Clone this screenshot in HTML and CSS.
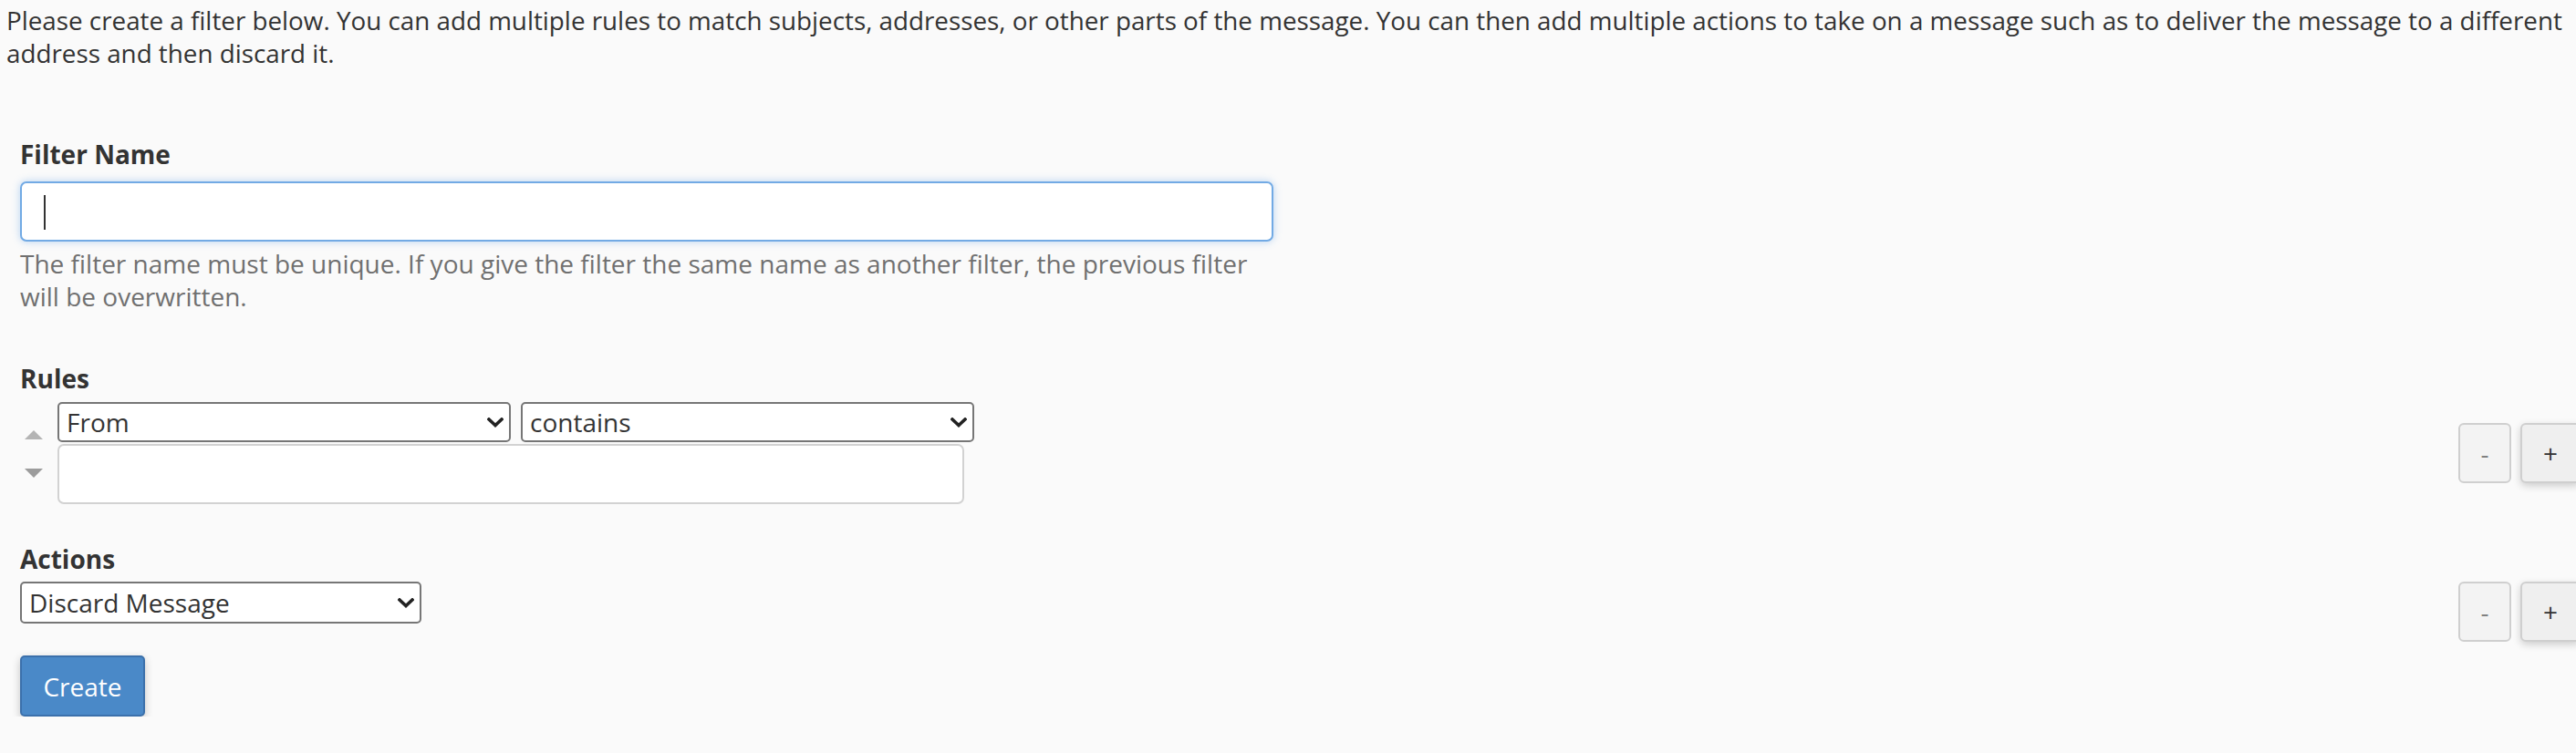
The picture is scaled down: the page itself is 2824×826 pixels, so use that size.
FILE: index.html
```html
<!DOCTYPE html>
<html lang="en">
<head>
<meta charset="utf-8">
<title>Create a New Filter</title>
<link rel="stylesheet" href="styles.css">
</head>
<body>
<div class="page">
  <p class="intro">Please create a filter below. You can add multiple rules to match subjects, addresses, or other parts of the message. You can then add multiple actions to take on a message such as to deliver the message to a different address and then discard it.</p>

  <form class="filter-form">
    <div class="name-group">
      <label class="field-label" for="filtername">Filter Name</label>
      <div class="input-wrap">
        <input id="filtername" class="text-input text-input--focus" type="text">
        <span class="caret"></span>
      </div>
      <p class="help">The filter name must be unique. If you give the filter the same name as another filter, the previous filter will be overwritten.</p>
    </div>

    <div class="section">
      <div class="field-label">Rules</div>
      <div class="row row--center">
        <div class="rule">
          <div class="movers">
            <span class="tri tri--up"></span>
            <span class="tri tri--down"></span>
          </div>
          <div class="rule-body">
            <div class="selects">
              <span class="select-wrap">
                <select class="select select--rule">
                  <option>From</option>
                </select>
                <svg class="chev" viewBox="0 0 18 11" width="18" height="11" aria-hidden="true"><polyline points="2,2 9,8.5 16,2" fill="none" stroke="#222" stroke-width="3.6" stroke-linecap="square"/></svg>
              </span>
              <span class="select-wrap">
                <select class="select select--rule">
                  <option>contains</option>
                </select>
                <svg class="chev" viewBox="0 0 18 11" width="18" height="11" aria-hidden="true"><polyline points="2,2 9,8.5 16,2" fill="none" stroke="#222" stroke-width="3.6" stroke-linecap="square"/></svg>
              </span>
            </div>
            <input class="text-input text-input--rule" type="text">
          </div>
        </div>
        <div class="btn-group">
          <button type="button" class="btn-sq btn-sq--minus">-</button>
          <button type="button" class="btn-sq btn-sq--plus">+</button>
        </div>
      </div>
    </div>

    <div class="section section--actions">
      <div class="field-label">Actions</div>
      <div class="row row--top">
        <span class="select-wrap">
          <select class="select select--action">
            <option>Discard Message</option>
          </select>
          <svg class="chev" viewBox="0 0 18 11" width="18" height="11" aria-hidden="true"><polyline points="2,2 9,8.5 16,2" fill="none" stroke="#222" stroke-width="3.6" stroke-linecap="square"/></svg>
        </span>
        <div class="btn-group">
          <button type="button" class="btn-sq btn-sq--minus">-</button>
          <button type="button" class="btn-sq btn-sq--plus">+</button>
        </div>
      </div>
    </div>

    <button type="button" class="btn-primary">Create</button>
  </form>
</div>
</body>
</html>
```

FILE: styles.css
```css
html, body {
  margin: 0;
  padding: 0;
}

body {
  background: #fafafa;
  color: #333333;
  font-family: "Open Sans", "Liberation Sans", sans-serif;
  font-size: 28px;
  overflow: hidden;
}

.page {
  padding: 4px 0 0 7px;
}

.intro {
  margin: 0 -8px 0 0;
  font-size: 27.8px;
  line-height: 36px;
}

.filter-form {
  margin: 78px 0 0 15px;
}

.field-label {
  display: block;
  font-weight: 700;
  line-height: 30px;
}

.name-group {
  width: 1374px;
}

.input-wrap {
  position: relative;
  margin-top: 15px;
}

.text-input {
  display: block;
  box-sizing: border-box;
  background: #ffffff;
  font: inherit;
  color: #333333;
  outline: none;
}

.text-input--focus {
  width: 1374px;
  height: 66px;
  border: 2px solid #72aae4;
  border-radius: 7px;
  box-shadow: 0 0 8px rgba(102, 165, 233, 0.45);
  padding: 0 24px;
}

.caret {
  position: absolute;
  left: 26px;
  top: 15px;
  width: 2px;
  height: 38px;
  background: #333333;
}

.help {
  margin: 6px 0 0 0;
  color: #707070;
  line-height: 36px;
}

.section {
  margin-top: 57px;
}

.section--actions {
  margin-top: 45px;
}

.row {
  display: flex;
  justify-content: space-between;
  margin-right: -5px;
}

.row--center {
  align-items: center;
  margin-top: 11px;
}

.row--top {
  align-items: flex-start;
  margin-top: 10px;
}

.rule {
  display: flex;
}

.movers {
  display: flex;
  flex-direction: column;
  gap: 32px;
  width: 41px;
  padding: 31px 0 0 5px;
  box-sizing: border-box;
}

.tri {
  display: block;
  width: 0;
  height: 0;
  border-left: 10px solid transparent;
  border-right: 10px solid transparent;
}

.tri--up {
  border-bottom: 10px solid #b4b4b4;
}

.tri--down {
  border-top: 10px solid #9c9c9c;
}

.selects {
  display: flex;
  gap: 11px;
}

.select-wrap {
  position: relative;
  display: block;
}

.select {
  display: block;
  box-sizing: border-box;
  height: 44px;
  border: 2px solid #767676;
  border-radius: 5px;
  background-color: #ffffff;
  color: #333333;
  font: inherit;
  padding: 0 36px 0 8px;
  -webkit-appearance: none;
  appearance: none;
  outline: none;
}

.chev {
  position: absolute;
  right: 8px;
  top: 50%;
  margin-top: -5px;
  pointer-events: none;
}

.select--rule {
  width: 497px;
}

.select--action {
  width: 440px;
  height: 46px;
}

.text-input--rule {
  width: 994px;
  height: 66px;
  margin-top: 2px;
  border: 2px solid #d2d2d2;
  border-radius: 7px;
}

.btn-group {
  display: flex;
  gap: 10px;
}

.btn-sq {
  box-sizing: border-box;
  height: 66px;
  border: 2px solid #cfcfcf;
  border-radius: 6px;
  font-family: inherit;
  font-size: 28px;
  padding: 0;
}

.btn-sq--minus {
  width: 58px;
  background: #f3f3f3;
  color: #808080;
}

.btn-sq--plus {
  width: 66px;
  background: #efefef;
  color: #333333;
  box-shadow: 0 3px 8px rgba(0, 0, 0, 0.18);
}

.btn-primary {
  display: block;
  margin-top: 15px;
  width: 137px;
  height: 67px;
  box-sizing: border-box;
  background: #4a89c8;
  border: 2px solid #3b70ab;
  border-radius: 5px;
  color: #ffffff;
  font-family: inherit;
  font-size: 28px;
  padding: 0;
  box-shadow: 0 3px 10px rgba(0, 0, 0, 0.22);
}
```
